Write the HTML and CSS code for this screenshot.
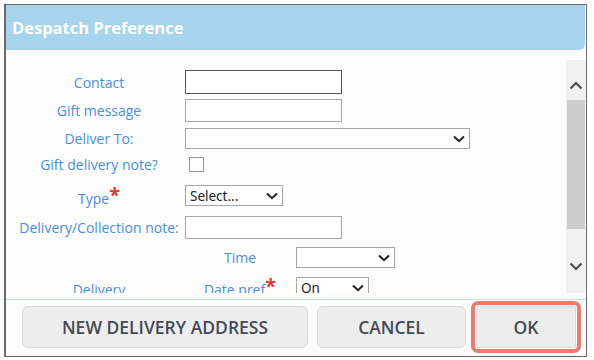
FILE: index.html
```html
<!DOCTYPE html>
<html lang="en">
<head>
    <meta charset="UTF-8">
    <title>Despatch Preference</title>
    <link rel="stylesheet" href="styles.css">
</head>
<body>
    <div class="dialog">
        <div class="dialog-head">Despatch Preference</div>

        <div class="dialog-body">
            <div class="form">
                <label class="lbl">Contact</label>
                <div><input type="text" class="txt focus"></div>

                <label class="lbl">Gift message</label>
                <div><input type="text" class="txt"></div>

                <label class="lbl">Deliver To:</label>
                <div>
                    <div class="select wide">
                        <span></span>
                        <svg width="12" height="8" viewBox="0 0 12 8"><path d="M1 1.5 L6 6.2 L11 1.5" fill="none" stroke="#222" stroke-width="2"/></svg>
                    </div>
                </div>

                <label class="lbl">Gift delivery note?</label>
                <div><span class="check"></span></div>

                <label class="lbl lbl-type">Type<span class="req">*</span></label>
                <div>
                    <div class="select type">
                        <span>Select...</span>
                        <svg width="12" height="8" viewBox="0 0 12 8"><path d="M1 1.5 L6 6.2 L11 1.5" fill="none" stroke="#222" stroke-width="2"/></svg>
                    </div>
                </div>

                <label class="lbl">Delivery/Collection note:</label>
                <div><input type="text" class="txt"></div>

                <span></span>
                <div class="sub">
                    <label class="lbl">Time</label>
                    <div class="select time">
                        <span></span>
                        <svg width="12" height="8" viewBox="0 0 12 8"><path d="M1 1.5 L6 6.2 L11 1.5" fill="none" stroke="#222" stroke-width="2"/></svg>
                    </div>
                </div>

                <label class="lbl lbl-delivery">Delivery</label>
                <div class="sub">
                    <label class="lbl lbl-pref">Date pref<span class="req">*</span></label>
                    <div class="select on">
                        <span>On</span>
                        <svg width="12" height="8" viewBox="0 0 12 8"><path d="M1 1.5 L6 6.2 L11 1.5" fill="none" stroke="#222" stroke-width="2"/></svg>
                    </div>
                </div>
            </div>

            <div class="scrollbar">
                <svg class="arrow" width="14" height="9" viewBox="0 0 14 9"><path d="M1.5 7.5 L7 2 L12.5 7.5" fill="none" stroke="#505050" stroke-width="2.2"/></svg>
                <div class="thumb"></div>
                <svg class="arrow down" width="14" height="9" viewBox="0 0 14 9"><path d="M1.5 1.5 L7 7 L12.5 1.5" fill="none" stroke="#505050" stroke-width="2.2"/></svg>
            </div>
        </div>

        <div class="dialog-foot">
            <button class="btn btn-new">NEW DELIVERY ADDRESS</button>
            <button class="btn btn-cancel">CANCEL</button>
            <button class="btn btn-ok">OK</button>
        </div>
    </div>
</body>
</html>
```

FILE: styles.css
```css
body {
    margin: 0;
    background-color: #fff;
    font-family: "Open Sans", "Liberation Sans", sans-serif;
}
.dialog {
    margin: 4px 0 0 4px;
    width: 583px;
    height: 353px;
    box-sizing: border-box;
    border: 1px solid #6a6a6a;
    border-left: 2px solid #6a6a6a;
    background-color: #fcfcfc;
    display: flex;
    flex-direction: column;
}
.dialog-head {
    height: 45px;
    flex: none;
    background-color: #a7d4ea;
    border-radius: 0 0 6px 0;
    margin-right: 1px;
    color: #fff;
    font-weight: 700;
    font-size: 16.5px;
    line-height: 45px;
    padding-left: 6px;
}
.dialog-body {
    height: 250px;
    flex: none;
    box-sizing: border-box;
    padding: 10px 1px 6px 0;
    border-bottom: 1px solid #c3dbee;
    display: flex;
}
.form {
    flex: 1;
    overflow: hidden;
    display: grid;
    grid-template-columns: 166px 1fr;
    grid-template-rows: 28px 29px 27px 25px 37px 26px 35px 25px;
    column-gap: 3px;
    align-items: center;
    padding: 8px 0 0 10px;
}
.lbl {
    color: #4a90d8;
    font-size: 14px;
    text-align: center;
    white-space: nowrap;
}
.lbl-type {
    padding-top: 5px;
}
.req {
    color: #e0393b;
    font-size: 20px;
    font-weight: 700;
    line-height: 10px;
    vertical-align: 2px;
}
.txt {
    display: block;
    width: 157px;
    height: 23px;
    box-sizing: border-box;
    margin: 0;
    border: 1px solid #a8a8a8;
    background-color: #fff;
}
.focus {
    height: 24px;
    border-color: #555;
}
.check {
    display: block;
    width: 15px;
    height: 15px;
    box-sizing: border-box;
    margin-left: 4px;
    border: 1px solid #999;
    background-color: #fff;
}
.select {
    display: flex;
    align-items: center;
    justify-content: space-between;
    box-sizing: border-box;
    height: 21px;
    padding: 0 4px 0 4px;
    border: 1px solid #a5a5a5;
    background-color: #fff;
    font-family: "Noto Sans", "Open Sans", sans-serif;
    font-size: 13.5px;
    color: #222;
}
.wide {
    width: 285px;
}
.type {
    width: 98px;
}
.time {
    width: 99px;
}
.on {
    width: 73px;
}
.sub {
    display: grid;
    grid-template-columns: 110px 1fr;
    align-items: center;
    column-gap: 1px;
}
.lbl-delivery {
    padding-top: 3px;
}
.lbl-pref {
    padding-top: 3px;
}
.scrollbar {
    width: 19px;
    background-color: #f0f0f0;
    display: flex;
    flex-direction: column;
    align-items: center;
}
.arrow {
    margin-top: 21px;
    flex: none;
}
.thumb {
    width: 18px;
    height: 129px;
    margin-top: 10px;
    background-color: #cdcdcd;
}
.arrow.down {
    margin-top: 33px;
}
.dialog-foot {
    flex: 1;
    display: flex;
    align-items: flex-start;
    padding: 6px 0 0 16px;
}
.btn {
    height: 42px;
    box-sizing: border-box;
    border: 1px solid #dadada;
    border-radius: 6px;
    background-color: #eeeded;
    color: #434a54;
    font-family: "Open Sans", sans-serif;
    font-weight: 600;
    font-size: 17.5px;
    padding: 0;
}
.btn-new {
    width: 286px;
    margin-right: 9px;
}
.btn-cancel {
    width: 149px;
    margin-right: 10px;
}
.btn-ok {
    width: 100px;
    border-radius: 2px;
    outline: 4px solid #e27f70;
    outline-offset: 1px;
}
```
